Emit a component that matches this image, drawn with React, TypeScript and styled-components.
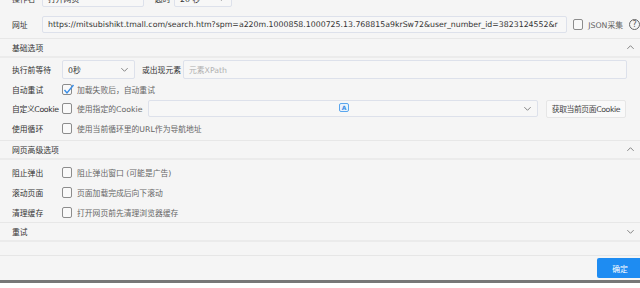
import React from 'react'
import styled, { createGlobalStyle } from 'styled-components'

const GlobalStyle = createGlobalStyle`
    html, body {
        margin: 0;
        padding: 0;
        background: #ffffff;
        overflow: hidden;
    }
`

const Window = styled.div`
    width: 640px;
    height: 288px;
    overflow: hidden;
    display: flex;
    flex-direction: column;
    font-family: "DejaVu Sans", "Noto Sans CJK SC", sans-serif;
    font-size: 7.8px;
    color: #333333;
`

const Dialog = styled.div`
    height: 280px;
    background: #f5f5f5;
    display: flex;
    flex-direction: column;
    overflow: hidden;
    border-bottom: 3px solid #777777;
`

const Content = styled.div`
    margin-top: -12px;
    display: flex;
    flex-direction: column;
    flex: 1;
`

const Row = styled.div<{ $h?: number; $mt?: number }>`
    display: flex;
    align-items: center;
    height: ${(p) => p.$h ?? 20}px;
    margin-top: ${(p) => p.$mt ?? 0}px;
    padding-left: 12px;
    flex-shrink: 0;
`

const Label = styled.span<{ $w: number; $ml?: number; $tight?: boolean }>`
    width: ${(p) => p.$w}px;
    margin-left: ${(p) => p.$ml ?? 0}px;
    flex-shrink: 0;
    white-space: nowrap;
    color: #333333;
    letter-spacing: ${(p) => (p.$tight ? '-0.35px' : 'normal')};
`

const Input = styled.div<{ $w?: number; $h?: number; $ml?: number }>`
    box-sizing: border-box;
    ${(p) => (p.$w ? `width: ${p.$w}px;` : 'flex: 1;')}
    height: ${(p) => p.$h ?? 17}px;
    margin-left: ${(p) => p.$ml ?? 0}px;
    border: 1px solid #dde1eb;
    border-radius: 2px;
    background: #f7f7f7;
    display: flex;
    align-items: center;
    padding: 0 5px;
    white-space: nowrap;
    overflow: hidden;
    color: #333333;
    position: relative;
`

const Placeholder = styled.span`
    color: #b0b0b0;
`

const SelectText = styled.span`
    flex: 1;
`

const Check = styled.span<{ $ml?: number }>`
    box-sizing: border-box;
    width: 10px;
    height: 11px;
    margin-left: ${(p) => p.$ml ?? 0}px;
    border: 1px solid #8c8c8c;
    border-radius: 2px;
    background: #f9f9f9;
    flex-shrink: 0;
    position: relative;
`

const CheckMark = styled.svg`
    position: absolute;
    left: 0px;
    top: -2px;
`

const CheckText = styled.span<{ $w?: number }>`
    margin-left: 5px;
    color: #666666;
    white-space: nowrap;
    ${(p) => (p.$w ? `width: ${p.$w}px; flex-shrink: 0;` : '')}
`

const Help = styled.span`
    box-sizing: border-box;
    width: 11px;
    height: 11px;
    border: 1px solid #666666;
    border-radius: 50%;
    margin-left: 6px;
    flex-shrink: 0;
    display: flex;
    align-items: center;
    justify-content: center;
    font-size: 8px;
    color: #555555;
`

const SectionHeader = styled.div<{ $mt?: number }>`
    box-sizing: border-box;
    height: 20px;
    margin-top: ${(p) => p.$mt ?? 0}px;
    border-top: 1px solid #e7e7e7;
    border-bottom: 2px solid #ebebeb;
    display: flex;
    align-items: center;
    justify-content: space-between;
    padding: 0 5px 0 12px;
    flex-shrink: 0;
`

const Body = styled.div<{ $pt: number; $pb: number }>`
    display: flex;
    flex-direction: column;
    padding-top: ${(p) => p.$pt}px;
    padding-bottom: ${(p) => p.$pb}px;
`

const ImeBadge = styled.span`
    position: absolute;
    left: 190px;
    top: 2px;
    box-sizing: border-box;
    width: 10px;
    height: 9px;
    border: 1px solid #5aa6ee;
    border-radius: 2px;
    font-size: 6px;
    line-height: 7px;
    text-align: center;
    color: #3a8ee6;
    font-weight: bold;
    background: #eaf3fc;
`

const SideButton = styled.div`
    box-sizing: border-box;
    height: 18px;
    width: 80px;
    margin-left: 8px;
    border: 1px solid #e6e6e6;
    border-radius: 2px;
    background: #f9f9f9;
    display: flex;
    align-items: center;
    justify-content: center;
    color: #444444;
    white-space: nowrap;
    letter-spacing: -0.4px;
    flex-shrink: 0;
`

const Footer = styled.div`
    margin-top: auto;
    border-top: 1px solid #e6e6e6;
    height: 25px;
    display: flex;
    justify-content: flex-end;
    align-items: flex-start;
    padding-top: 2px;
    box-sizing: border-box;
`

const PrimaryButton = styled.div`
    width: 46px;
    height: 20px;
    margin-right: -3px;
    background: #1e8cf2;
    border-radius: 2px;
    color: #ffffff;
    display: flex;
    align-items: center;
    justify-content: center;
`

const Chevron = ({ up = false, size = 9 }: { up?: boolean; size?: number }) => (
    <svg width={size} height={size} viewBox="0 0 10 10">
        <polyline
            points={up ? '1.5,6.5 5,3 8.5,6.5' : '1.5,3.5 5,7 8.5,3.5'}
            fill="none"
            stroke="#777777"
            strokeWidth="1"
        />
    </svg>
)

const Box = ({ checked = false, ml = 0 }: { checked?: boolean; ml?: number }) => (
    <Check $ml={ml}>
        {checked && (
            <CheckMark width="12" height="13" viewBox="0 0 12 13">
                <polyline points="1.5,7 4,10 10.5,2" fill="none" stroke="#3a8ee6" strokeWidth="1.4" />
            </CheckMark>
        )}
    </Check>
)

const url =
    'https://mitsubishikt.tmall.com/search.htm?spm=a220m.1000858.1000725.13.768815a9krSw72&user_number_id=3823124552&r'

const App = (): JSX.Element => {
    return (
        <>
            <GlobalStyle />
            <Window>
                <Dialog>
                    <Content>
                        <Row>
                            <Label $w={30}>操作名</Label>
                            <Input $w={102}>打开网页</Input>
                            <Label $w={19} $ml={11}>超时</Label>
                            <Input $w={58}>
                                <SelectText>20 秒</SelectText>
                                <Chevron />
                            </Input>
                        </Row>
                        <Row $mt={6}>
                            <Label $w={30}>网址</Label>
                            <Input $h={17}>{url}</Input>
                            <Box ml={6} />
                            <CheckText>JSON采集</CheckText>
                            <Help>?</Help>
                        </Row>

                        <SectionHeader $mt={4}>
                            <span>基础选项</span>
                            <Chevron up />
                        </SectionHeader>
                        <Body $pt={2} $pb={2}>
                            <Row $h={19.5}>
                                <Label $w={50}>执行前等待</Label>
                                <Input $w={73} $h={19}>
                                    <SelectText>0秒</SelectText>
                                    <Chevron />
                                </Input>
                                <Label $w={41} $ml={7}>或出现元素</Label>
                                <Input $w={444} $h={19}>
                                    <Placeholder>元素XPath</Placeholder>
                                </Input>
                            </Row>
                            <Row $h={19.5}>
                                <Label $w={50}>自动重试</Label>
                                <Box checked />
                                <CheckText>加载失败后，自动重试</CheckText>
                            </Row>
                            <Row $h={19.5}>
                                <Label $w={50} $tight>自定义Cookie</Label>
                                <Box />
                                <CheckText $w={71}>使用指定的Cookie</CheckText>
                                <Input $w={390} $h={17}>
                                    <SelectText />
                                    <ImeBadge>A</ImeBadge>
                                    <Chevron />
                                </Input>
                                <SideButton>获取当前页面Cookie</SideButton>
                            </Row>
                            <Row $h={19.5}>
                                <Label $w={50}>使用循环</Label>
                                <Box />
                                <CheckText>使用当前循环里的URL作为导航地址</CheckText>
                            </Row>
                        </Body>

                        <SectionHeader>
                            <span>网页高级选项</span>
                            <Chevron up />
                        </SectionHeader>
                        <Body $pt={2} $pb={0}>
                            <Row>
                                <Label $w={50}>阻止弹出</Label>
                                <Box />
                                <CheckText>阻止弹出窗口 (可能是广告)</CheckText>
                            </Row>
                            <Row>
                                <Label $w={50}>滚动页面</Label>
                                <Box />
                                <CheckText>页面加载完成后向下滚动</CheckText>
                            </Row>
                            <Row>
                                <Label $w={50}>清理缓存</Label>
                                <Box />
                                <CheckText>打开网页前先清理浏览器缓存</CheckText>
                            </Row>
                        </Body>

                        <SectionHeader>
                            <span>重试</span>
                            <Chevron />
                        </SectionHeader>

                        <Footer>
                            <PrimaryButton>确定</PrimaryButton>
                        </Footer>
                    </Content>
                </Dialog>
            </Window>
        </>
    )
}

export default App
